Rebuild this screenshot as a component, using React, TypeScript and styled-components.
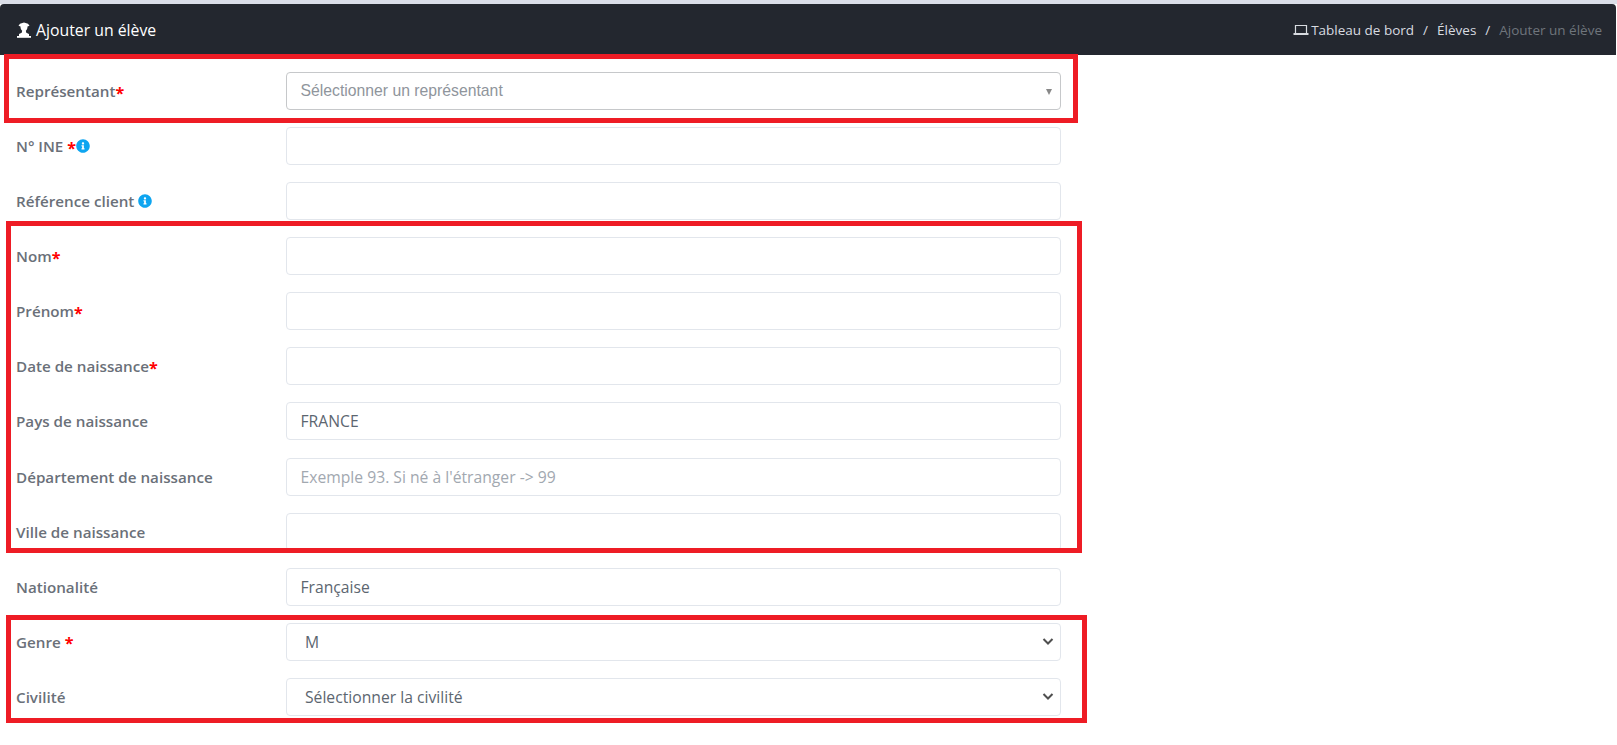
import React from "react";
import styled, { createGlobalStyle } from "styled-components";
import { FaInfoCircle } from "react-icons/fa";

const Global = createGlobalStyle`
  html, body { margin: 0; padding: 0; height: 745px; overflow: hidden; background: #fff; }
  #root { height: 745px; }
  * { box-sizing: border-box; }
`;

const Page = styled.div`
  position: relative;
  height: 745px;
  overflow: hidden;
  padding-top: 4px;
  background: #fff;
  font-family: "Open Sans", sans-serif;
  &::before {
    content: "";
    position: absolute;
    inset: 0 0 auto 0;
    height: 4px;
    background: #dadee8;
  }
`;

const Header = styled.header`
  height: 51px;
  margin-right: 1px;
  display: flex;
  align-items: center;
  justify-content: space-between;
  padding: 0 14px 0 16px;
  background: #23272f;
  border-radius: 4px 4px 0 0;
`;

const Title = styled.h1`
  margin: 0;
  display: flex;
  align-items: center;
  gap: 4px;
  font-size: 15.8px;
  font-weight: 400;
  color: #fff;
`;

const Crumbs = styled.nav`
  display: flex;
  align-items: center;
  font-size: 13.5px;
  color: #d8dbe0;
`;

const CrumbLink = styled.span`
  display: inline-flex;
  align-items: center;
  gap: 2px;
`;

const Sep = styled.span`
  padding: 0 9px;
  color: #d8dbe0;
`;

const CrumbCurrent = styled.span`
  color: #6f757c;
`;

const Form = styled.form`
  padding: 17px 0 0 16px;
`;

const Row = styled.div`
  display: grid;
  grid-template-columns: 270px 775px;
  align-items: center;
  margin-bottom: 17.08px;
`;

const Label = styled.label`
  display: inline-flex;
  align-items: center;
  font-size: 15.2px;
  font-weight: 600;
  color: #6a7079;
  white-space: pre;
`;

const Star = styled.span`
  margin-top: 3px;
  color: #f00;
  font-weight: 700;
  font-size: 16px;
  line-height: 1;
`;

const Info = styled(FaInfoCircle)`
  color: #0ea5f0;
  width: 14px;
  height: 14px;
`;

const fieldBase = `
  width: 100%;
  height: 38px;
  padding: 6px 13.5px;
  border: 1px solid #e2e6ec;
  border-radius: 4px;
  background: #fff;
  font-family: "Open Sans", sans-serif;
  font-size: 15.7px;
  color: #5c6670;
  outline: none;
`;

const Input = styled.input`
  ${fieldBase}
  &::placeholder {
    color: #a2a8b0;
    opacity: 1;
  }
`;

const SelectWrap = styled.div`
  position: relative;
  height: 38px;
`;

const Select = styled.select`
  ${fieldBase}
  appearance: none;
  padding-left: 18px;
`;

const Chevron = styled.svg`
  position: absolute;
  right: 7px;
  top: 14px;
  width: 12px;
  height: 9px;
  pointer-events: none;
`;

const Combo = styled.div`
  position: relative;
  height: 38px;
  display: flex;
  align-items: center;
  padding: 0 13.5px;
  border: 1px solid #c6c8ca;
  border-radius: 4px;
  background: #fff;
  font-family: "Liberation Sans", Arial, sans-serif;
  font-size: 15.75px;
  color: #8f959c;
  &::after {
    content: "";
    position: absolute;
    right: 8px;
    top: 16px;
    border-style: solid;
    border-width: 6px 3.5px 0 3.5px;
    border-color: #888 transparent transparent transparent;
  }
`;

const Frame = styled.div<{ $left: number; $top: number; $width: number; $height: number }>`
  position: absolute;
  left: ${(p) => p.$left}px;
  top: ${(p) => p.$top}px;
  width: ${(p) => p.$width}px;
  height: ${(p) => p.$height}px;
  border: 5px solid #ee1c25;
  pointer-events: none;
`;

const BustIcon = () => (
  <svg width="16" height="16" viewBox="0 0 16 16" aria-hidden="true">
    <path
      fill="#fff"
      d="M4 1.800 8 .5l4 1.300 1.500 2-2 .8c0 2-.6 3.400-1.700 4.200l.5 2 2.700 1.200V14H3v-2l2.700-1.200.5-2C5.100 8 4.500 6.600 4.500 4.600l-2-.8z"
    />
    <rect fill="#fff" x="1" y="14" width="14" height="1.800" />
  </svg>
);

const LaptopIcon = () => (
  <svg width="16" height="14" viewBox="0 0 16 14" aria-hidden="true">
    <path d="M2.500 10V2.500h11V10" fill="none" stroke="#d8dbe0" strokeWidth="1.2" />
    <rect x="0.5" y="10" width="15" height="2" fill="#d8dbe0" />
  </svg>
);

const ChevronIcon = () => (
  <Chevron viewBox="0 0 12 9" aria-hidden="true">
    <path d="M1.500 2 6 6.500 10.500 2" fill="none" stroke="#4f4f4f" strokeWidth="2" />
  </Chevron>
);

type Field = {
  label: string;
  star?: string;
  info?: boolean;
  value?: string;
  placeholder?: string;
};

const fields: Field[] = [
  { label: "N° INE ", star: "*", info: true },
  { label: "Référence client ", info: true },
  { label: "Nom", star: "*" },
  { label: "Prénom", star: "*" },
  { label: "Date de naissance", star: "*" },
  { label: "Pays de naissance", value: "FRANCE" },
  { label: "Département de naissance", placeholder: "Exemple 93. Si né à l'étranger -> 99" },
  { label: "Ville de naissance" },
  { label: "Nationalité", value: "Française" },
];

const FieldLabel = ({ label, star, info }: Field) => (
  <Label>
    {label}
    {star && <Star>{star}</Star>}
    {info && <Info />}
  </Label>
);

export default function App() {
  return (
    <Page>
      <Global />
      <Header>
        <Title>
          <BustIcon />
          Ajouter un élève
        </Title>
        <Crumbs>
          <CrumbLink>
            <LaptopIcon />
            Tableau de bord
          </CrumbLink>
          <Sep>/</Sep>
          <CrumbLink>Élèves</CrumbLink>
          <Sep>/</Sep>
          <CrumbCurrent>Ajouter un élève</CrumbCurrent>
        </Crumbs>
      </Header>
      <Form>
        <Row>
          <FieldLabel label="Représentant" star="*" />
          <Combo>Sélectionner un représentant</Combo>
        </Row>
        {fields.map((f) => (
          <Row key={f.label}>
            <FieldLabel {...f} />
            <Input defaultValue={f.value} placeholder={f.placeholder} />
          </Row>
        ))}
        <Row>
          <FieldLabel label="Genre " star="*" />
          <SelectWrap>
            <Select defaultValue="M">
              <option>M</option>
              <option>F</option>
            </Select>
            <ChevronIcon />
          </SelectWrap>
        </Row>
        <Row>
          <FieldLabel label="Civilité" />
          <SelectWrap>
            <Select defaultValue="Sélectionner la civilité">
              <option>Sélectionner la civilité</option>
            </Select>
            <ChevronIcon />
          </SelectWrap>
        </Row>
      </Form>
      <Frame $left={4} $top={54} $width={1074} $height={69} />
      <Frame $left={6} $top={221} $width={1076} $height={332} />
      <Frame $left={6} $top={615} $width={1081} $height={108} />
    </Page>
  );
}
